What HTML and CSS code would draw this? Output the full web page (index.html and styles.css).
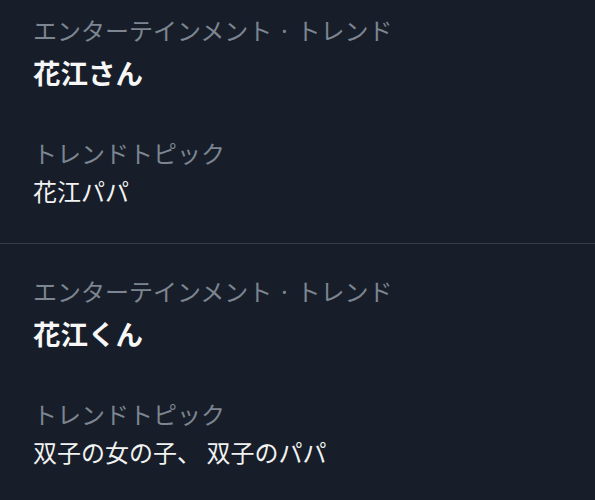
FILE: index.html
```html
<!DOCTYPE html>
<html lang="ja">
<head>
<meta charset="utf-8">
<link rel="stylesheet" href="styles.css">
</head>
<body>
<div class="list">
  <div class="trend">
    <div class="cat">エンターテインメント · トレンド</div>
    <div class="title">花江さん</div>
    <div class="label">トレンドトピック</div>
    <div class="topic">花江パパ</div>
  </div>
  <div class="trend">
    <div class="cat">エンターテインメント · トレンド</div>
    <div class="title">花江くん</div>
    <div class="label">トレンドトピック</div>
    <div class="topic">双子の女の子、 双子のパパ</div>
  </div>
</div>
</body>
</html>
```
FILE: styles.css
```css
html, body {
  margin: 0;
  padding: 0;
  background: #171e29;
  overflow: hidden;
}
body {
  font-family: "Noto Sans CJK JP", "Noto Sans", sans-serif;
}
.list {
  margin-top: -17px;
}
.trend {
  padding: 31px 33px 36px;
  border-bottom: 1px solid #363d48;
}
.cat {
  font-size: 24px;
  line-height: 32px;
  color: #7d8591;
  white-space: nowrap;
}
.title {
  margin-top: 8px;
  font-size: 27.5px;
  line-height: 36px;
  font-weight: 700;
  color: #f7f7f7;
}
.label {
  margin-top: 47px;
  font-size: 24px;
  line-height: 32px;
  color: #7d8591;
}
.topic {
  margin-top: 6px;
  font-size: 24px;
  line-height: 32px;
  color: #f2f2f2;
}
```
